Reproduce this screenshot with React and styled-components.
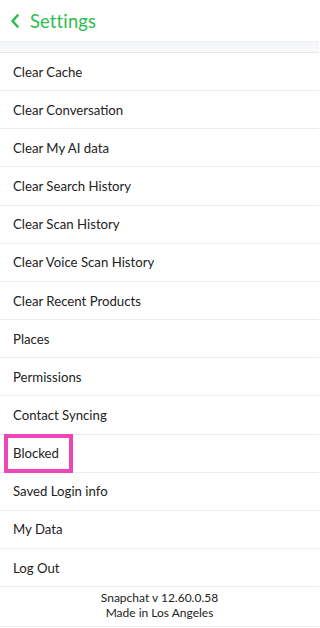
import styled, { createGlobalStyle } from "styled-components";

const GlobalStyle = createGlobalStyle`
  html, body {
    margin: 0;
    padding: 0;
    background: #ffffff;
  }
  body {
    font-family: "Lato", "Noto Sans", sans-serif;
    -webkit-font-smoothing: antialiased;
  }
`;

const Page = styled.div`
  width: 319px;
  min-height: 628px;
  display: flex;
  flex-direction: column;
  background: #ffffff;
`;

const Header = styled.header`
  height: 41px;
  display: flex;
  align-items: center;
  gap: 10px;
  padding-left: 10px;
  color: #2bbd4e;
`;

const Title = styled.h1`
  margin: 0;
  font-size: 18.3px;
  font-weight: 400;
  letter-spacing: 0.2px;
`;

const Band = styled.div`
  height: 10px;
  background: #f6f7f9;
  border-top: 1px solid #eeeff1;
  border-bottom: 1px solid #e6e7ea;
`;

const List = styled.ul`
  list-style: none;
  margin: 0;
  padding: 0;
`;

const Row = styled.li`
  height: 37.17px;
  display: flex;
  align-items: center;
  padding-left: 13px;
  border-bottom: 1px solid #ececee;
  font-size: 13.2px;
  color: #222222;
`;

const Highlight = styled.span`
  position: relative;
  z-index: 1;
  box-sizing: border-box;
  display: inline-flex;
  align-items: center;
  width: 69px;
  height: 39px;
  margin-left: -9px;
  padding-left: 5px;
  border: 4px solid #ee45bb;
  background: #ffffff;
`;

const Footer = styled.footer`
  box-sizing: border-box;
  height: 40px;
  padding-bottom: 4px;
  display: flex;
  flex-direction: column;
  align-items: center;
  justify-content: center;
  font-size: 12px;
  line-height: 15px;
  color: #222222;
  border-bottom: 1px solid #ececee;
`;

const items = [
  "Clear Cache",
  "Clear Conversation",
  "Clear My AI data",
  "Clear Search History",
  "Clear Scan History",
  "Clear Voice Scan History",
  "Clear Recent Products",
  "Places",
  "Permissions",
  "Contact Syncing",
  "Blocked",
  "Saved Login info",
  "My Data",
  "Log Out",
];

function Chevron() {
  return (
    <svg width="10" height="14" viewBox="0 0 10 14">
      <path
        d="M7.5 1.5 L2.5 7 L7.5 12.5"
        fill="none"
        stroke="currentColor"
        strokeWidth="2.6"
        strokeLinecap="round"
        strokeLinejoin="round"
      />
    </svg>
  );
}

export default function App() {
  return (
    <>
      <GlobalStyle />
      <Page>
        <Header>
          <Chevron />
          <Title>Settings</Title>
        </Header>
        <Band />
        <List>
          {items.map((item) => (
            <Row key={item}>
              {item === "Blocked" ? <Highlight>{item}</Highlight> : item}
            </Row>
          ))}
        </List>
        <Footer>
          <div>Snapchat v 12.60.0.58</div>
          <div>Made in Los Angeles</div>
        </Footer>
      </Page>
    </>
  );
}
